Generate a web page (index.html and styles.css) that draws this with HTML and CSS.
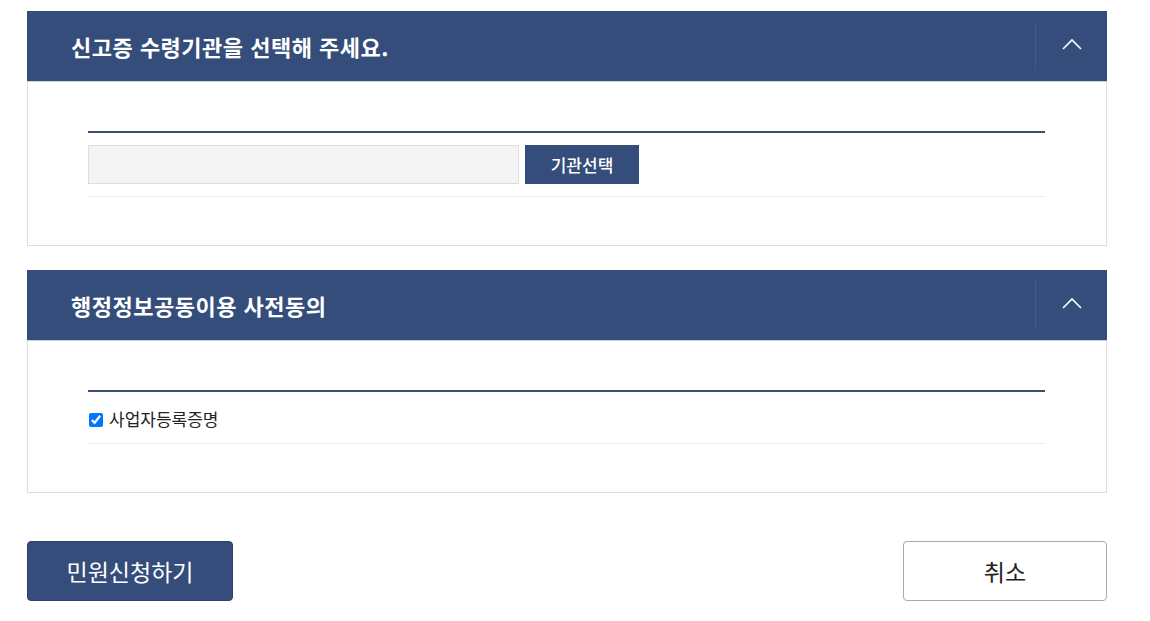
FILE: index.html
```html
<!DOCTYPE html>
<html lang="ko">
<head>
    <meta charset="UTF-8">
    <meta name="viewport" content="width=device-width, initial-scale=1.0">
    <title>민원신청</title>
    <link rel="stylesheet" href="styles.css">
</head>
<body>
    <div class="wrap">
        <div class="panel">
            <div class="panel-head">
                <h2>신고증 수령기관을 선택해 주세요.</h2>
                <button class="toggle" type="button">
                    <svg width="20" height="12" viewBox="0 0 20 12"><path d="M1 11 L10 2 L19 11" fill="none" stroke="#fff" stroke-width="1.6"/></svg>
                </button>
            </div>
            <div class="panel-body">
                <div class="form-row">
                    <input type="text" class="org-input" readonly>
                    <button type="button" class="btn-small">기관선택</button>
                </div>
            </div>
        </div>

        <div class="panel">
            <div class="panel-head">
                <h2>행정정보공동이용 사전동의</h2>
                <button class="toggle" type="button">
                    <svg width="20" height="12" viewBox="0 0 20 12"><path d="M1 11 L10 2 L19 11" fill="none" stroke="#fff" stroke-width="1.6"/></svg>
                </button>
            </div>
            <div class="panel-body">
                <div class="form-row check-row">
                    <input type="checkbox" id="bizCert" checked>
                    <label for="bizCert">사업자등록증명</label>
                </div>
            </div>
        </div>

        <div class="actions">
            <button type="button" class="btn-submit">민원신청하기</button>
            <button type="button" class="btn-cancel">취소</button>
        </div>
    </div>
</body>
</html>
```

FILE: styles.css
```css
body {
    margin: 0;
    padding: 0;
    background: #fff;
    font-family: "Noto Sans CJK KR", "Noto Sans", sans-serif;
    color: #222;
}

.wrap {
    width: 1080px;
    padding: 11px 0 0 27px;
}

.panel {
    margin-bottom: 24px;
}

.panel-head {
    background-color: #344d7a;
    height: 70px;
    display: flex;
    align-items: center;
    justify-content: space-between;
}

.panel-head h2 {
    margin: 0 0 0 44px;
    color: #fff;
    font-size: 22px;
    font-weight: bold;
    letter-spacing: 0.5px;
}

.toggle {
    width: 72px;
    height: 48px;
    background: none;
    border: none;
    border-left: 1px solid #435b86;
    display: flex;
    align-items: center;
    justify-content: center;
    padding: 0;
    padding-bottom: 4px;
}

.panel-body {
    border: 1px solid #ddd;
    border-top: 1px solid #c9d0dc;
    padding: 49px 61px 48px 60px;
}

.form-row {
    border-top: 2px solid #3d4d6e;
    border-bottom: 1px solid #eee;
    padding: 12px 0;
    display: flex;
    align-items: center;
}

.org-input {
    width: 431px;
    height: 39px;
    box-sizing: border-box;
    border: 1px solid #ddd;
    background: #f4f4f4;
    margin: 0 6px 0 0;
}

.btn-small {
    width: 114px;
    height: 39px;
    background: #344d7a;
    color: #fff;
    border: none;
    font-family: inherit;
    font-size: 17px;
    font-weight: 500;
}

.check-row {
    padding: 16px 0 13px;
}

.check-row input[type="checkbox"] {
    width: 14px;
    height: 14px;
    margin: 1px 6px 0 1px;
}

.check-row label {
    font-size: 17px;
    color: #222;
    line-height: 22px;
}

.actions {
    display: flex;
    justify-content: space-between;
    padding-top: 24px;
}

.btn-submit {
    width: 206px;
    height: 60px;
    background: #344d7a;
    color: #fff;
    border: 1px solid #2c4169;
    border-radius: 4px;
    font-family: inherit;
    font-size: 23px;
}

.btn-cancel {
    width: 204px;
    height: 60px;
    background: #fff;
    color: #222;
    border: 1px solid #aaa;
    border-radius: 4px;
    font-family: inherit;
    font-size: 23px;
}
```
